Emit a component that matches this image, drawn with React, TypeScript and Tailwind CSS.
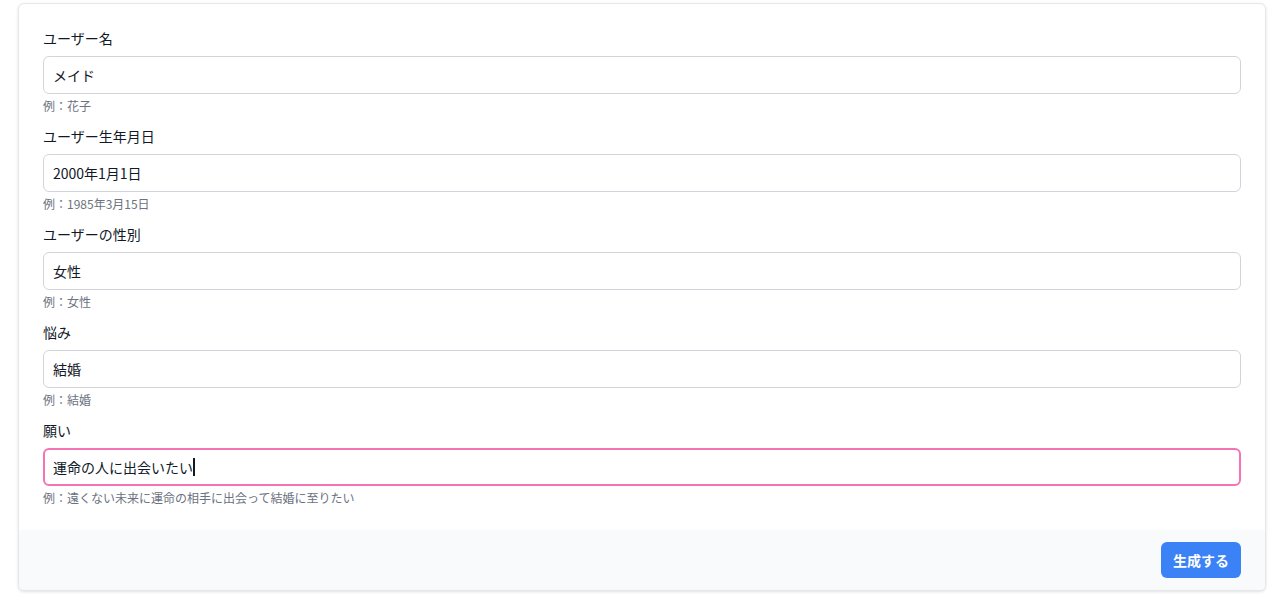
import React from "react";

const fields = [
  { label: "ユーザー名", value: "メイド", hint: "例：花子" },
  { label: "ユーザー生年月日", value: "2000年1月1日", hint: "例：1985年3月15日" },
  { label: "ユーザーの性別", value: "女性", hint: "例：女性" },
  { label: "悩み", value: "結婚", hint: "例：結婚" },
  { label: "願い", value: "運命の人に出会いたい", hint: "例：遠くない未来に運命の相手に出会って結婚に至りたい", focused: true },
];

export default function App() {
  return (
    <div
      className="min-h-[616px] bg-white pt-[3px] pl-[18px] pr-[20px]"
      style={{ fontFamily: '"Noto Sans CJK JP", "Noto Sans", sans-serif' }}
    >
      <div className="rounded-md border border-[#e5e7eb] bg-white shadow-[0_1px_3px_rgba(0,0,0,0.12)] overflow-hidden">
        <div className="px-6 pt-6 pb-6 flex flex-col gap-3">
          {fields.map((f) => (
            <div key={f.label} className="flex flex-col">
              <div className="text-sm leading-5 text-[#111827] mb-2">{f.label}</div>
              {f.focused ? (
                <div className="h-[38px] rounded-md border-2 border-[#f472b6] px-[8px] flex items-center text-sm text-[#111827]">
                  <span>{f.value}</span>
                  <span className="inline-block w-[2px] h-[18px] bg-[#111827]" />
                </div>
              ) : (
                <div className="h-[38px] rounded-md border border-[#d1d5db] px-[9px] flex items-center text-sm text-[#111827]">
                  {f.value}
                </div>
              )}
              <div className="mt-1 text-xs leading-4 text-[#6b7280]">{f.hint}</div>
            </div>
          ))}
        </div>
        <div className="bg-[#f9fafb] px-6 py-3 flex justify-end">
          <button className="h-9 w-20 rounded-md bg-[#3b82f6] text-white text-sm font-bold">生成する</button>
        </div>
      </div>
    </div>
  );
}
